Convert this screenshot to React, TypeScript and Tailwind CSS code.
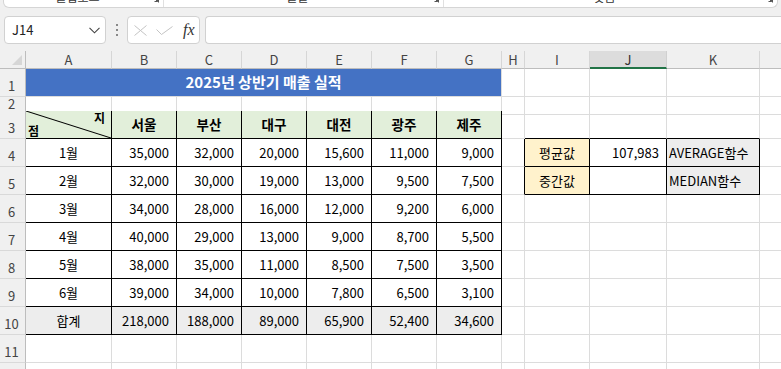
import React from "react";

const GRID =
  "grid grid-cols-[26px_86px_65px_65px_65px_65px_65px_65px_23px_65px_77px_93px_22px]";

const G = "border-r border-b border-[#dcdcdc]";
const B = "border-r border-b border-black";
const TOPB = "border-r border-b border-r-[#dcdcdc] border-b-black";
const LEFTB = "border-r border-b border-r-black border-b-[#dcdcdc]";

function RowHead({ n }: { n?: number }) {
  return (
    <div className="flex items-end justify-center pb-[4px] pr-[2px] bg-[#f0f0f0] border-r border-b border-r-[#bdbdbd] border-b-[#d9d9d9] text-[13px] leading-none text-[#444]">
      {n}
    </div>
  );
}

const data: [string, string[]][] = [
  ["1월", ["35,000", "32,000", "20,000", "15,600", "11,000", "9,000"]],
  ["2월", ["32,000", "30,000", "19,000", "13,000", "9,500", "7,500"]],
  ["3월", ["34,000", "28,000", "16,000", "12,000", "9,200", "6,000"]],
  ["4월", ["40,000", "29,000", "13,000", "9,000", "8,700", "5,500"]],
  ["5월", ["38,000", "35,000", "11,000", "8,500", "7,500", "3,500"]],
  ["6월", ["39,000", "34,000", "10,000", "7,800", "6,500", "3,100"]],
];

const totals = ["218,000", "188,000", "89,000", "65,900", "52,400", "34,600"];
const cities = ["서울", "부산", "대구", "대전", "광주", "제주"];
const letters = ["A", "B", "C", "D", "E", "F", "G", "H", "I", "J", "K", ""];

function Launcher() {
  return (
    <svg width="8" height="8" viewBox="0 0 8 8" className="shrink-0">
      <path d="M0.5 0.5 H7.5 V7.5" fill="none" stroke="#555" strokeWidth="1" />
      <path d="M2 2 L6.5 6.5 M3.5 6.5 H6.5 V3.5" fill="none" stroke="#555" strokeWidth="1" />
    </svg>
  );
}

export default function App() {
  return (
    <div className="w-[781px] h-[369px] overflow-hidden bg-[#f0f0f0] font-['Noto_Sans_CJK_KR',sans-serif] text-black">
      {/* ribbon remnant */}
      <div className="px-[3px]">
        <div className="h-[8px] overflow-hidden bg-white border-b border-x border-[#d5d5d5] rounded-b-[6px] flex">
          <div className="w-[160px] flex items-start border-r border-[#e0e0e0]">
            <div className="flex-1 text-center text-[12px] leading-[16px] mt-[-11px] text-[#333]">클립보드</div>
            <div className="mt-[-5px] mr-[4px]"><Launcher /></div>
          </div>
          <div className="w-[280px] flex items-start border-r border-[#e0e0e0]">
            <div className="flex-1 text-center text-[12px] leading-[16px] mt-[-11px] text-[#333]">글꼴</div>
            <div className="mt-[-5px] mr-[4px]"><Launcher /></div>
          </div>
          <div className="flex-1 flex items-start">
            <div className="flex-1 text-center text-[12px] leading-[16px] mt-[-11px] text-[#333]">맞춤</div>
            <div className="mt-[-5px] mr-[4px]"><Launcher /></div>
          </div>
        </div>
      </div>

      {/* formula bar */}
      <div className="flex items-center pt-[8px] pb-[7px] pl-[4px]">
        <div className="w-[102px] h-[28px] bg-white border border-[#d1d1d1] rounded-[4px] flex items-center pl-[7px] pr-[5px]">
          <span className="flex-1 text-[13px] text-[#222]">J14</span>
          <svg width="11" height="7" viewBox="0 0 11 7">
            <path d="M0.5 0.8 L5.5 5.8 L10.5 0.8" fill="none" stroke="#444" strokeWidth="1.1" />
          </svg>
        </div>
        <div className="w-[21px] flex flex-col items-center gap-[3px]">
          <div className="w-[2px] h-[2px] bg-[#888]" />
          <div className="w-[2px] h-[2px] bg-[#888]" />
          <div className="w-[2px] h-[2px] bg-[#888]" />
        </div>
        <div className="w-[73px] h-[28px] bg-white border border-[#d1d1d1] rounded-[4px] flex items-center pl-[5px]">
          <svg width="13" height="11" viewBox="0 0 13 11" className="ml-[1px]">
            <path d="M0.5 0.5 L12.5 10.5 M12.5 0.5 L0.5 10.5" fill="none" stroke="#c4c4c4" strokeWidth="1" />
          </svg>
          <svg width="17" height="9" viewBox="0 0 17 9" className="ml-[9px]">
            <path d="M0.5 3.5 L5.5 8.5 L16.5 0.5" fill="none" stroke="#c4c4c4" strokeWidth="1" />
          </svg>
          <span className="ml-[10px] text-[16px] italic font-['Liberation_Serif',serif] text-[#333] leading-none">
            fx
          </span>
        </div>
        <div className="ml-[5px] flex-1 h-[28px] bg-white border border-r-0 border-[#d1d1d1] rounded-l-[4px]" />
      </div>

      {/* column header */}
      <div className={`${GRID} h-[18px]`}>
        <div className="relative bg-[#f0f0f0] border-r border-b border-[#bdbdbd]">
          <svg width="10" height="10" viewBox="0 0 10 10" className="absolute left-[12px] top-[4px]">
            <path d="M10 0 L10 10 L0 10 Z" fill="#d6d6d6" />
          </svg>
        </div>
        {letters.map((l, i) =>
          l === "J" ? (
            <div
              key={i}
              className="bg-[#dcdcdc] border-r border-r-[#d0d0d0] border-b-2 border-b-[#217346] flex items-center justify-center text-[13px] leading-none text-[#333]"
            >
              {l}
            </div>
          ) : (
            <div
              key={i}
              className="bg-[#f0f0f0] border-r border-r-[#d6d6d6] border-b border-b-[#bdbdbd] flex items-center justify-center text-[13px] leading-none text-[#444]"
            >
              {l}
            </div>
          )
        )}
      </div>

      {/* sheet */}
      <div className="bg-white">
        {/* row 1 */}
        <div className={`${GRID} h-[28px]`}>
          <RowHead n={1} />
          <div className={`col-span-7 bg-[#4472c4] ${G} flex items-center justify-center text-white font-bold text-[15px]`}>
            2025년 상반기 매출 실적
          </div>
          <div className={G} />
          <div className={G} />
          <div className={G} />
          <div className={G} />
          <div className={G} />
        </div>

        {/* row 2 */}
        <div className={`${GRID} h-[14px]`}>
          <RowHead n={2} />
          <div className={TOPB} />
          <div className={TOPB} />
          <div className={TOPB} />
          <div className={TOPB} />
          <div className={TOPB} />
          <div className={TOPB} />
          <div className={TOPB} />
          <div className={G} />
          <div className={G} />
          <div className={G} />
          <div className={G} />
          <div className={G} />
        </div>

        {/* row 3 */}
        <div className={`${GRID} h-[28px]`}>
          <RowHead n={3} />
          <div className={`relative bg-[#e2efda] ${B} flex flex-col justify-between`}>
            <svg className="absolute inset-0 w-full h-full" preserveAspectRatio="none" viewBox="0 0 100 100">
              <line x1="0" y1="0" x2="100" y2="100" stroke="black" strokeWidth="1" vectorEffect="non-scaling-stroke" />
            </svg>
            <span className="self-end pr-[6px] text-[12px] leading-[13px] font-bold">지</span>
            <span className="self-start pl-[2px] pb-[1px] text-[12px] leading-[13px] font-bold">점</span>
          </div>
          {cities.map((c) => (
            <div key={c} className={`bg-[#e2efda] ${B} flex items-center justify-center font-bold text-[13.5px]`}>
              {c}
            </div>
          ))}
          <div className={G} />
          <div className={TOPB} />
          <div className={TOPB} />
          <div className={TOPB} />
          <div className={G} />
        </div>

        {/* rows 4-9 */}
        {data.map(([m, vals], r) => (
          <div key={m} className={`${GRID} h-[28px]`}>
            <RowHead n={r + 4} />
            <div className={`${B} flex items-center justify-center text-[13px]`}>{m}</div>
            {vals.map((v, i) => (
              <div key={i} className={`${B} flex items-center justify-end pr-[7px] text-[13px]`}>
                {v}
              </div>
            ))}
            {r === 0 ? (
              <>
                <div className={LEFTB} />
                <div className={`bg-[#fff2cc] ${B} flex items-center justify-center text-[13px]`}>평균값</div>
                <div className={`${B} flex items-center justify-end pr-[7px] text-[13px]`}>107,983</div>
                <div className={`bg-[#ededed] ${B} flex items-center pl-[2px] text-[13px]`}>AVERAGE함수</div>
              </>
            ) : r === 1 ? (
              <>
                <div className={LEFTB} />
                <div className={`bg-[#fff2cc] ${B} flex items-center justify-center text-[13px]`}>중간값</div>
                <div className={B} />
                <div className={`bg-[#ededed] ${B} flex items-center pl-[2px] text-[13px]`}>MEDIAN함수</div>
              </>
            ) : (
              <>
                <div className={G} />
                <div className={G} />
                <div className={G} />
                <div className={G} />
              </>
            )}
            <div className={G} />
          </div>
        ))}

        {/* row 10 */}
        <div className={`${GRID} h-[28px]`}>
          <RowHead n={10} />
          <div className={`bg-[#ededed] ${B} flex items-center justify-center text-[13px]`}>합계</div>
          {totals.map((v, i) => (
            <div key={i} className={`bg-[#ededed] ${B} flex items-center justify-end pr-[7px] text-[13px]`}>
              {v}
            </div>
          ))}
          <div className={G} />
          <div className={G} />
          <div className={G} />
          <div className={G} />
          <div className={G} />
        </div>

        {/* rows 11-12 */}
        {[11, 12].map((n) => (
          <div key={n} className={`${GRID} h-[28px]`}>
            <RowHead n={n} />
            <div className={G} />
            <div className={G} />
            <div className={G} />
            <div className={G} />
            <div className={G} />
            <div className={G} />
            <div className={G} />
            <div className={G} />
            <div className={G} />
            <div className={G} />
            <div className={G} />
            <div className={G} />
          </div>
        ))}
      </div>
    </div>
  );
}
